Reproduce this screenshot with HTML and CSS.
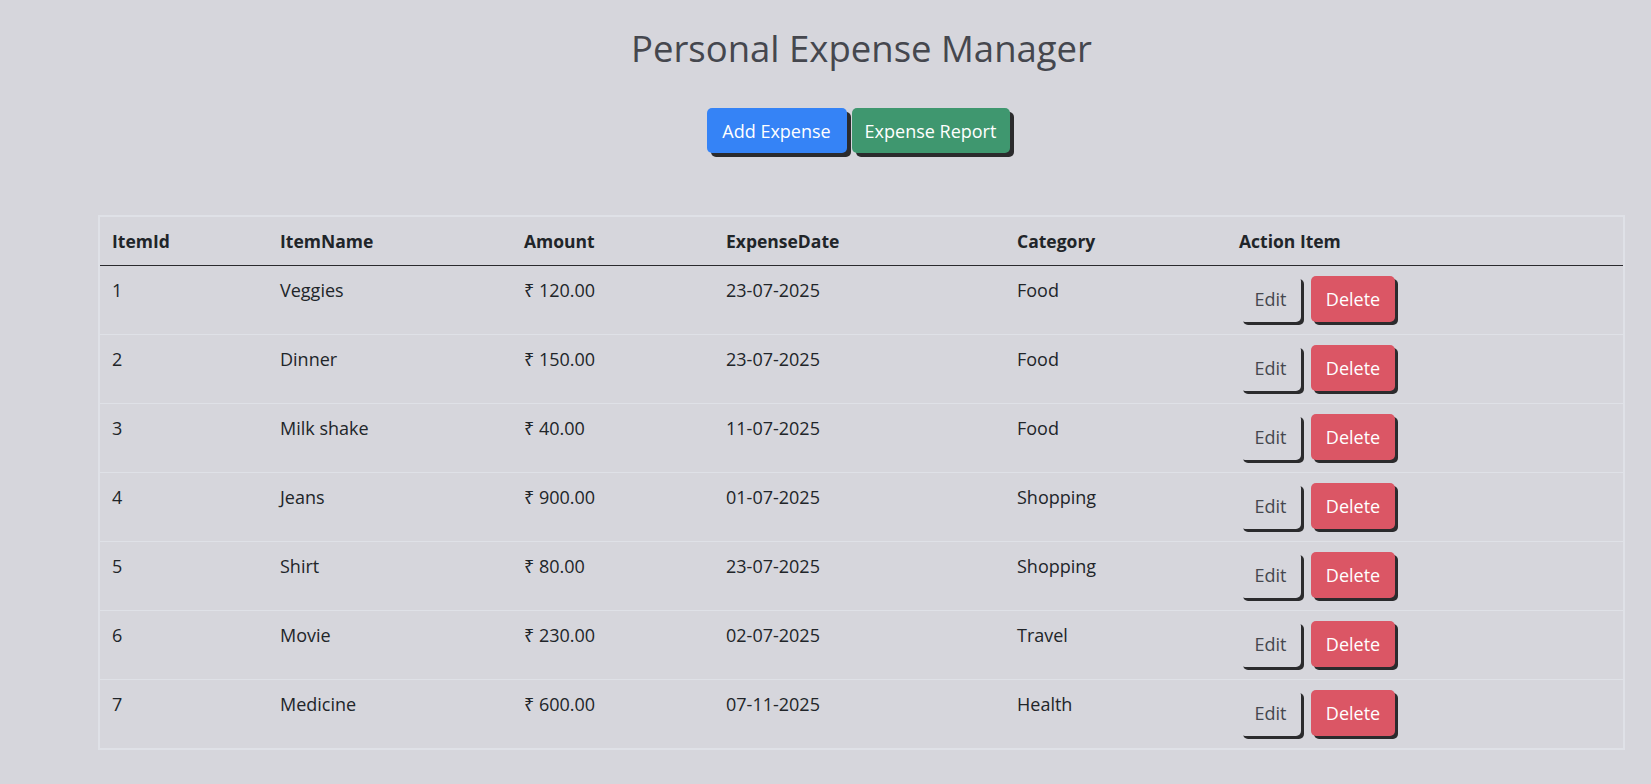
FILE: index.html
```html
<!DOCTYPE html>
<html lang="en">
<head>
<meta charset="utf-8">
<title>Personal Expense Manager</title>
<link rel="stylesheet" href="styles.css">
</head>
<body>
<div class="container">
  <h1 class="title">Personal Expense Manager</h1>
  <div class="actions">
    <button class="btn btn-primary">Add Expense</button>
    <button class="btn btn-success">Expense Report</button>
  </div>
  <table class="expenses">
    <colgroup>
      <col class="c1"><col class="c2"><col class="c3"><col class="c4"><col class="c5"><col class="c6">
    </colgroup>
    <thead>
      <tr><th>ItemId</th><th>ItemName</th><th>Amount</th><th>ExpenseDate</th><th>Category</th><th>Action Item</th></tr>
    </thead>
    <tbody>
      <tr><td>1</td><td>Veggies</td><td>₹ 120.00</td><td>23-07-2025</td><td>Food</td><td class="act"><div class="row-btns"><button class="btn btn-edit">Edit</button><button class="btn btn-danger">Delete</button></div></td></tr>
      <tr><td>2</td><td>Dinner</td><td>₹ 150.00</td><td>23-07-2025</td><td>Food</td><td class="act"><div class="row-btns"><button class="btn btn-edit">Edit</button><button class="btn btn-danger">Delete</button></div></td></tr>
      <tr><td>3</td><td>Milk shake</td><td>₹ 40.00</td><td>11-07-2025</td><td>Food</td><td class="act"><div class="row-btns"><button class="btn btn-edit">Edit</button><button class="btn btn-danger">Delete</button></div></td></tr>
      <tr><td>4</td><td>Jeans</td><td>₹ 900.00</td><td>01-07-2025</td><td>Shopping</td><td class="act"><div class="row-btns"><button class="btn btn-edit">Edit</button><button class="btn btn-danger">Delete</button></div></td></tr>
      <tr><td>5</td><td>Shirt</td><td>₹ 80.00</td><td>23-07-2025</td><td>Shopping</td><td class="act"><div class="row-btns"><button class="btn btn-edit">Edit</button><button class="btn btn-danger">Delete</button></div></td></tr>
      <tr><td>6</td><td>Movie</td><td>₹ 230.00</td><td>02-07-2025</td><td>Travel</td><td class="act"><div class="row-btns"><button class="btn btn-edit">Edit</button><button class="btn btn-danger">Delete</button></div></td></tr>
      <tr><td>7</td><td>Medicine</td><td>₹ 600.00</td><td>07-11-2025</td><td>Health</td><td class="act"><div class="row-btns"><button class="btn btn-edit">Edit</button><button class="btn btn-danger">Delete</button></div></td></tr>
    </tbody>
  </table>
</div>
</body>
</html>
```
FILE: styles.css
```css
html, body {
  margin: 0;
  padding: 0;
  background: #d6d6dc;
}
body {
  font-family: "Open Sans", "Noto Sans", sans-serif;
  font-size: 18px;
  color: #212529;
}
.container {
  width: 1527px;
  margin-left: 98px;
}
.title {
  margin: 0;
  padding-top: 22px;
  text-align: center;
  font-size: 36.5px;
  font-weight: 500;
  line-height: 52px;
  color: #45474e;
}
.actions {
  display: flex;
  justify-content: center;
  gap: 5px;
  margin-top: 34px;
  padding-right: 7px;
}
.btn {
  font-family: inherit;
  font-size: 18px;
  line-height: 24px;
  height: 45px;
  padding: 0 10px;
  border: none;
  border-radius: 5px;
  color: #fff;
  white-space: nowrap;
  box-shadow: 4px 4px 0 #2b2b2d;
  cursor: pointer;
}
.btn-primary { background: #3583f6; width: 140px; }
.btn-success { background: #3f976f; width: 158px; }
.btn-danger { background: #db5665; width: 84px; height: 46px; box-shadow: 3px 3px 0 #2b2b2d; }
.btn-edit {
  background: transparent;
  color: #45474e;
  width: 61px;
  height: 46px;
  box-shadow: 3px 3px 0 #2b2b2d;
}
.expenses {
  width: 1527px;
  margin-top: 62px;
  border-collapse: collapse;
  table-layout: fixed;
  border: 2px solid #dfe1e7;
}
.c1 { width: 169px; }
.c2 { width: 244px; }
.c3 { width: 202px; }
.c4 { width: 291px; }
.c5 { width: 222px; }
.expenses th, .expenses td {
  text-align: left;
  vertical-align: top;
  padding: 12px 11px 12px 12px;
  line-height: 24px;
}
.expenses th {
  font-size: 17.5px;
  font-weight: 700;
  border-bottom: 1px solid #2a2a2e;
}
.expenses td {
  border-bottom: 1px solid #dfe1e7;
  height: 44px;
}
.expenses td.act {
  padding: 10px 11px 12px 13px;
}
.row-btns {
  display: flex;
  gap: 10px;
}
```
